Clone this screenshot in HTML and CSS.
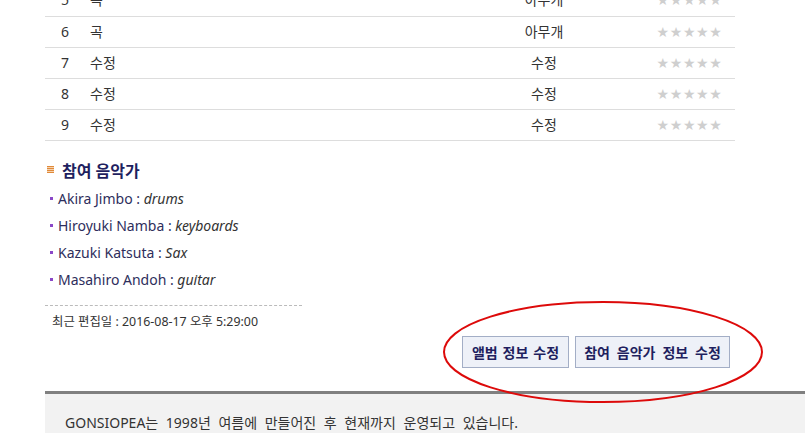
FILE: index.html
```html
<!DOCTYPE html>
<html lang="ko">
<head>
  <meta charset="UTF-8" />
  <title>앨범 정보</title>
  <link rel="stylesheet" href="styles.css">
</head>
<body>

  <div class="page">
    <!-- 수록곡 -->
    <table class="tracks">
      <tr><td class="num">5</td><td class="title">곡</td><td class="artist">아무개</td><td class="rate"><span class="stars">★★★★★</span></td></tr>
      <tr><td class="num">6</td><td class="title">곡</td><td class="artist">아무개</td><td class="rate"><span class="stars">★★★★★</span></td></tr>
      <tr><td class="num">7</td><td class="title">수정</td><td class="artist">수정</td><td class="rate"><span class="stars">★★★★★</span></td></tr>
      <tr><td class="num">8</td><td class="title">수정</td><td class="artist">수정</td><td class="rate"><span class="stars">★★★★★</span></td></tr>
      <tr><td class="num">9</td><td class="title">수정</td><td class="artist">수정</td><td class="rate"><span class="stars">★★★★★</span></td></tr>
    </table>

    <!-- 참여 음악가 -->
    <h3 class="section-title"><span class="title-icon"></span>참여 음악가</h3>
    <ul class="musicians">
      <li>Akira Jimbo : <em>drums</em></li>
      <li>Hiroyuki Namba : <em>keyboards</em></li>
      <li>Kazuki Katsuta : <em>Sax</em></li>
      <li>Masahiro Andoh : <em>guitar</em></li>
    </ul>

    <div class="divider"></div>
    <p class="edited">최근 편집일 : 2016-08-17 오후 5:29:00</p>

    <div class="actions">
      <button class="btn btn-album">앨범 정보 수정</button>
      <button class="btn btn-artist">참여 음악가 정보 수정</button>
    </div>

    <svg class="circle-mark" width="324" height="106" viewBox="0 0 324 106">
      <ellipse cx="161" cy="52" rx="159" ry="50" fill="none" stroke="#dd0a0a" stroke-width="2" />
    </svg>
  </div>

  <div class="footer">
    <p>GONSIOPEA는 1998년 여름에 만들어진 후 현재까지 운영되고 있습니다.</p>
  </div>

</body>
</html>
```

FILE: styles.css
```css
* {
  box-sizing: border-box;
}

body {
  margin: 0;
  padding: 0;
  font-family: "Noto Sans", "Noto Sans CJK KR", sans-serif;
  font-size: 14px;
  color: #333;
  background: #fff;
  overflow: hidden;
}

.page {
  position: relative;
  margin-left: 45px;
  width: 690px;
}

/* tracks */
.tracks {
  width: 690px;
  margin-top: -15px;
  border-collapse: collapse;
  table-layout: fixed;
}

.tracks td {
  height: 31px;
  padding: 0;
  border-bottom: 1px solid #ddd;
  line-height: 16px;
}

.num {
  width: 40px;
  text-align: center;
}

.title {
  padding-left: 5px !important;
}

.artist {
  width: 200px;
  text-align: center;
}

.rate {
  width: 91px;
  text-align: center;
}

.stars {
  color: #cfcfcf;
  font-family: "DejaVu Sans", sans-serif;
  font-size: 14px;
  letter-spacing: 0.6px;
}

/* musicians */
.section-title {
  display: flex;
  align-items: center;
  margin: 19px 0 0 2px;
  height: 20px;
  font-size: 16px;
  font-weight: bold;
  color: #1f1f5f;
}

.title-icon {
  width: 7px;
  height: 7px;
  margin-right: 8px;
  background: repeating-linear-gradient(#e08a3a 0 1px, #f6d2ae 1px 2px);
}

.musicians {
  list-style: none;
  margin: 5px 0 0;
  padding: 0;
}

.musicians li {
  position: relative;
  padding-left: 13px;
  line-height: 27px;
  color: #2e2e5c;
}

.musicians li::before {
  content: "";
  position: absolute;
  left: 5px;
  top: 12px;
  width: 3px;
  height: 3px;
  background: #8a48c8;
}

.musicians em {
  color: #333;
}

.divider {
  width: 257px;
  margin-top: 12px;
  border-top: 1px dashed #bbb;
}

.edited {
  margin: 8px 0 0 7px;
  font-size: 12.4px;
  line-height: 16px;
  color: #333;
}

/* buttons */
.actions {
  display: flex;
  justify-content: flex-end;
  gap: 6px;
  margin-top: 6px;
  padding-right: 5px;
}

.btn {
  height: 32px;
  padding: 0;
  border: 1px solid #a3aec6;
  background: #eef1f8;
  color: #1f1f5f;
  font-family: "Noto Sans CJK KR", sans-serif;
  font-size: 14px;
  font-weight: bold;
  text-align: center;
  white-space: nowrap;
  cursor: pointer;
}

.btn-album {
  width: 107px;
  word-spacing: 1px;
}

.btn-artist {
  width: 155px;
  word-spacing: 3px;
}

.circle-mark {
  position: absolute;
  left: 397px;
  top: 315px;
}

/* footer */
.footer {
  margin: 23px 0 0 45px;
  height: 60px;
  border-top: 3px solid #808080;
  background: #f2f2f2;
}

.footer p {
  margin: 0;
  padding: 21px 0 0 20px;
  line-height: 16px;
  word-spacing: 4px;
}
```
